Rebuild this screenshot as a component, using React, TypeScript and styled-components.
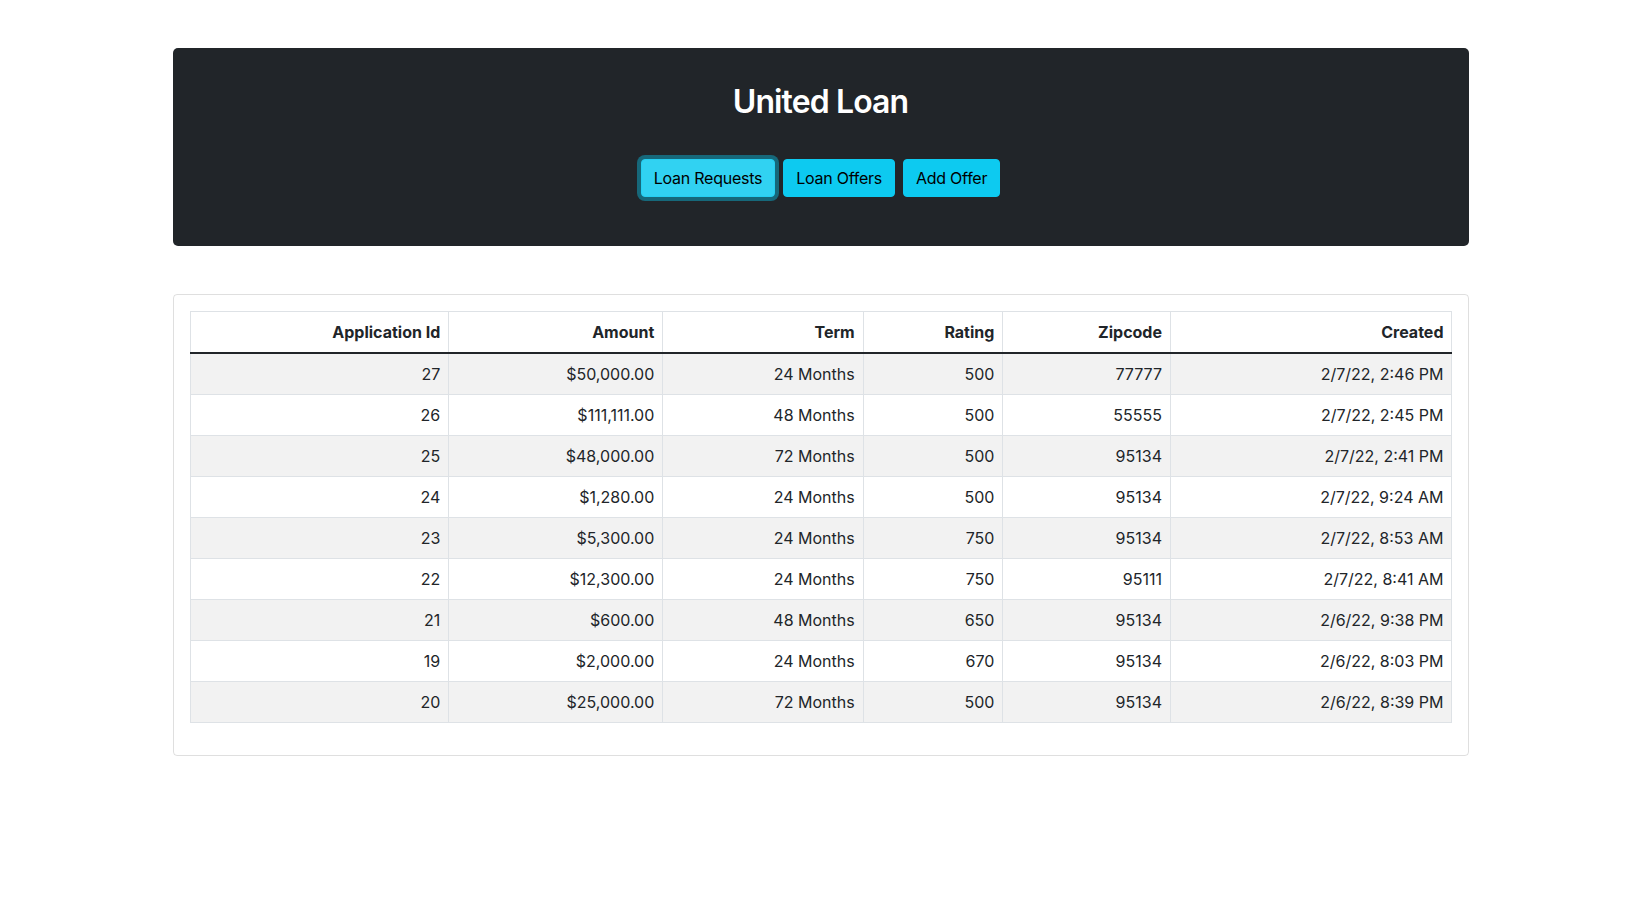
import React from "react";
import styled, { createGlobalStyle } from "styled-components";

const GlobalStyle = createGlobalStyle`
  *, *::before, *::after { box-sizing: border-box; }
  body {
    margin: 0;
    font-family: Inter, "Noto Sans", "Liberation Sans", sans-serif;
    font-size: 16px;
    line-height: 1.5;
    color: #212529;
    background: #fff;
  }
`;

const Container = styled.div`
  max-width: 1320px;
  margin: 0 auto;
  padding: 0 12px;
`;

const Hero = styled.header`
  margin-top: 48px;
  background: #212529;
  border-radius: 5px;
  padding: 35px 0 49px;
  display: flex;
  flex-direction: column;
  align-items: center;
`;

const Title = styled.h2`
  margin: 0 0 38px;
  font-size: 32px;
  font-weight: 600;
  line-height: 1.2;
  color: #fff;
  letter-spacing: -0.9px;
`;

const Nav = styled.nav`
  display: flex;
  gap: 8px;
`;

const NavButton = styled.button<{ $active?: boolean }>`
  font-family: inherit;
  font-size: 16px;
  line-height: 24px;
  letter-spacing: -0.25px;
  height: 38px;
  padding: 6px 12px;
  border-radius: 4px;
  color: #000;
  cursor: pointer;
  background: ${(p) => (p.$active ? "#31d2f2" : "#0dcaf0")};
  border: 1px solid ${(p) => (p.$active ? "#25cff2" : "#0dcaf0")};
  box-shadow: ${(p) => (p.$active ? "0 0 0 4px rgba(11,172,204,0.5)" : "none")};
`;

const Card = styled.section`
  margin-top: 48px;
  border: 1px solid rgba(0, 0, 0, 0.125);
  border-radius: 4px;
  padding: 16px;
`;

const Table = styled.table`
  width: 100%;
  border-collapse: collapse;
  table-layout: fixed;
  margin-bottom: 16px;
  color: #212529;
`;

const Th = styled.th`
  padding: 8px;
  text-align: right;
  font-weight: 700;
  border: 1px solid #dee2e6;
  border-bottom: 2px solid #212529;
  white-space: nowrap;
`;

const Row = styled.tr<{ $striped: boolean }>`
  background: ${(p) => (p.$striped ? "#f2f2f2" : "#fff")};
`;

const Td = styled.td`
  padding: 8px;
  text-align: right;
  border: 1px solid #dee2e6;
  white-space: nowrap;
`;

const columns = [
  { label: "Application Id", width: 258.8 },
  { label: "Amount", width: 214 },
  { label: "Term", width: 200.4 },
  { label: "Rating", width: 139.7 },
  { label: "Zipcode", width: 167.6 },
  { label: "Created", width: 281.5 },
];

const rows = [
  ["27", "$50,000.00", "24 Months", "500", "77777", "2/7/22, 2:46 PM"],
  ["26", "$111,111.00", "48 Months", "500", "55555", "2/7/22, 2:45 PM"],
  ["25", "$48,000.00", "72 Months", "500", "95134", "2/7/22, 2:41 PM"],
  ["24", "$1,280.00", "24 Months", "500", "95134", "2/7/22, 9:24 AM"],
  ["23", "$5,300.00", "24 Months", "750", "95134", "2/7/22, 8:53 AM"],
  ["22", "$12,300.00", "24 Months", "750", "95111", "2/7/22, 8:41 AM"],
  ["21", "$600.00", "48 Months", "650", "95134", "2/6/22, 9:38 PM"],
  ["19", "$2,000.00", "24 Months", "670", "95134", "2/6/22, 8:03 PM"],
  ["20", "$25,000.00", "72 Months", "500", "95134", "2/6/22, 8:39 PM"],
];

export default function App() {
  return (
    <>
      <GlobalStyle />
      <Container>
        <Hero>
          <Title>United Loan</Title>
          <Nav>
            <NavButton $active>Loan Requests</NavButton>
            <NavButton>Loan Offers</NavButton>
            <NavButton>Add Offer</NavButton>
          </Nav>
        </Hero>
        <Card>
          <Table>
            <colgroup>
              {columns.map((c) => (
                <col key={c.label} style={{ width: c.width }} />
              ))}
            </colgroup>
            <thead>
              <tr>
                {columns.map((c) => (
                  <Th key={c.label}>{c.label}</Th>
                ))}
              </tr>
            </thead>
            <tbody>
              {rows.map((r, i) => (
                <Row key={r[0]} $striped={i % 2 === 0}>
                  {r.map((v, j) => (
                    <Td key={j}>{v}</Td>
                  ))}
                </Row>
              ))}
            </tbody>
          </Table>
        </Card>
      </Container>
    </>
  );
}
